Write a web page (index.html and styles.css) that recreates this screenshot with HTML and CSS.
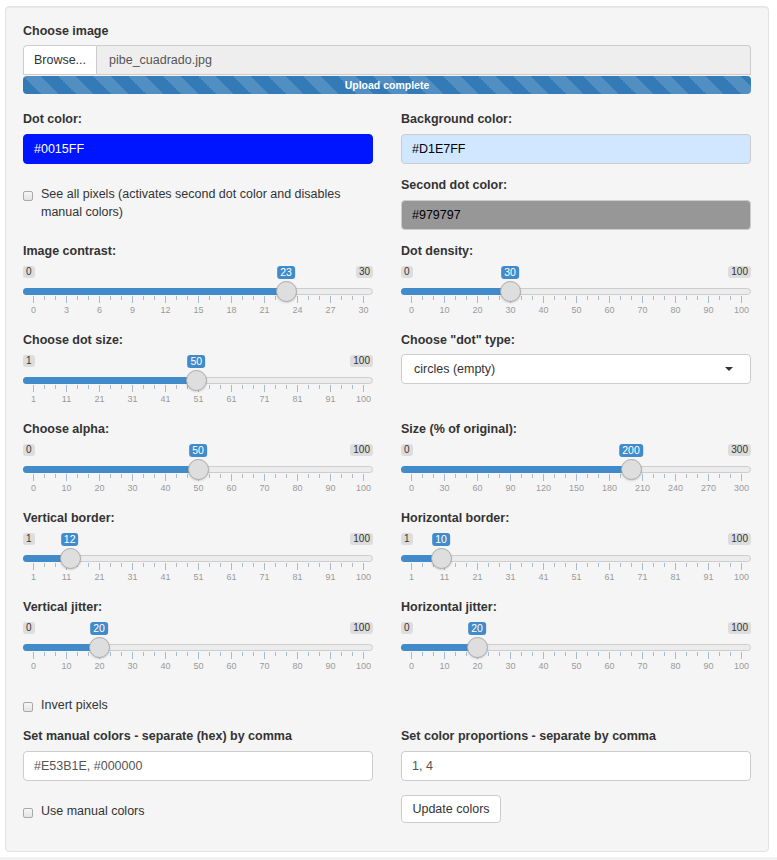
FILE: index.html
```html
<!DOCTYPE html>
<html lang="en">
<head>
<meta charset="utf-8">
<title>Dot image settings</title>
<link rel="stylesheet" href="styles.css">
</head>
<body>
<div class="well">
  <div class="field">
    <label class="ctl-label">Choose image</label>
    <div class="file-row"><span class="btn-browse">Browse...</span><span class="file-name">pibe_cuadrado.jpg</span></div>
    <div class="progress">Upload complete</div>
  </div>

  <div class="row r-colors">
    <div class="col">
      <label class="ctl-label">Dot color:</label>
      <div class="input c-dot">#0015FF</div>
      <div class="check check-two"><span class="box"></span><span>See all pixels (activates second dot color and disables manual colors)</span></div>
    </div>
    <div class="col">
      <label class="ctl-label">Background color:</label>
      <div class="input c-bg">#D1E7FF</div>
      <label class="ctl-label lbl-second">Second dot color:</label>
      <div class="input c-second">#979797</div>
    </div>
  </div>

  <div class="row r-sliders">
    <div class="slider">
      <label class="ctl-label">Image contrast:</label>
      <div class="irs" style="--p:0.7667">
        <div class="irs-minmax"><span class="irs-mm">0</span><span class="irs-mm">30</span></div>
        <div class="irs-track"><span class="irs-bar"></span><span class="irs-single">23</span><span class="irs-handle"></span></div>
        <div class="irs-ticks"></div>
        <div class="irs-grid"><span>0</span><span>3</span><span>6</span><span>9</span><span>12</span><span>15</span><span>18</span><span>21</span><span>24</span><span>27</span><span>30</span></div>
      </div>
    </div>
    <div class="slider">
      <label class="ctl-label">Dot density:</label>
      <div class="irs" style="--p:0.3">
        <div class="irs-minmax"><span class="irs-mm">0</span><span class="irs-mm">100</span></div>
        <div class="irs-track"><span class="irs-bar"></span><span class="irs-single">30</span><span class="irs-handle"></span></div>
        <div class="irs-ticks"></div>
        <div class="irs-grid"><span>0</span><span>10</span><span>20</span><span>30</span><span>40</span><span>50</span><span>60</span><span>70</span><span>80</span><span>90</span><span>100</span></div>
      </div>
    </div>

    <div class="slider">
      <label class="ctl-label">Choose dot size:</label>
      <div class="irs" style="--p:0.4949">
        <div class="irs-minmax"><span class="irs-mm">1</span><span class="irs-mm">100</span></div>
        <div class="irs-track"><span class="irs-bar"></span><span class="irs-single">50</span><span class="irs-handle"></span></div>
        <div class="irs-ticks"></div>
        <div class="irs-grid"><span>1</span><span>11</span><span>21</span><span>31</span><span>41</span><span>51</span><span>61</span><span>71</span><span>81</span><span>91</span><span>100</span></div>
      </div>
    </div>
    <div class="select-field">
      <label class="ctl-label">Choose "dot" type:</label>
      <div class="select"><span>circles (empty)</span><span class="caret"></span></div>
    </div>

    <div class="slider">
      <label class="ctl-label">Choose alpha:</label>
      <div class="irs" style="--p:0.5">
        <div class="irs-minmax"><span class="irs-mm">0</span><span class="irs-mm">100</span></div>
        <div class="irs-track"><span class="irs-bar"></span><span class="irs-single">50</span><span class="irs-handle"></span></div>
        <div class="irs-ticks"></div>
        <div class="irs-grid"><span>0</span><span>10</span><span>20</span><span>30</span><span>40</span><span>50</span><span>60</span><span>70</span><span>80</span><span>90</span><span>100</span></div>
      </div>
    </div>
    <div class="slider">
      <label class="ctl-label">Size (% of original):</label>
      <div class="irs" style="--p:0.6667">
        <div class="irs-minmax"><span class="irs-mm">0</span><span class="irs-mm">300</span></div>
        <div class="irs-track"><span class="irs-bar"></span><span class="irs-single">200</span><span class="irs-handle"></span></div>
        <div class="irs-ticks"></div>
        <div class="irs-grid"><span>0</span><span>30</span><span>60</span><span>90</span><span>120</span><span>150</span><span>180</span><span>210</span><span>240</span><span>270</span><span>300</span></div>
      </div>
    </div>

    <div class="slider">
      <label class="ctl-label">Vertical border:</label>
      <div class="irs" style="--p:0.1111">
        <div class="irs-minmax"><span class="irs-mm">1</span><span class="irs-mm">100</span></div>
        <div class="irs-track"><span class="irs-bar"></span><span class="irs-single">12</span><span class="irs-handle"></span></div>
        <div class="irs-ticks"></div>
        <div class="irs-grid"><span>1</span><span>11</span><span>21</span><span>31</span><span>41</span><span>51</span><span>61</span><span>71</span><span>81</span><span>91</span><span>100</span></div>
      </div>
    </div>
    <div class="slider">
      <label class="ctl-label">Horizontal border:</label>
      <div class="irs" style="--p:0.0909">
        <div class="irs-minmax"><span class="irs-mm">1</span><span class="irs-mm">100</span></div>
        <div class="irs-track"><span class="irs-bar"></span><span class="irs-single">10</span><span class="irs-handle"></span></div>
        <div class="irs-ticks"></div>
        <div class="irs-grid"><span>1</span><span>11</span><span>21</span><span>31</span><span>41</span><span>51</span><span>61</span><span>71</span><span>81</span><span>91</span><span>100</span></div>
      </div>
    </div>

    <div class="slider">
      <label class="ctl-label">Vertical jitter:</label>
      <div class="irs" style="--p:0.2">
        <div class="irs-minmax"><span class="irs-mm">0</span><span class="irs-mm">100</span></div>
        <div class="irs-track"><span class="irs-bar"></span><span class="irs-single">20</span><span class="irs-handle"></span></div>
        <div class="irs-ticks"></div>
        <div class="irs-grid"><span>0</span><span>10</span><span>20</span><span>30</span><span>40</span><span>50</span><span>60</span><span>70</span><span>80</span><span>90</span><span>100</span></div>
      </div>
    </div>
    <div class="slider">
      <label class="ctl-label">Horizontal jitter:</label>
      <div class="irs" style="--p:0.2">
        <div class="irs-minmax"><span class="irs-mm">0</span><span class="irs-mm">100</span></div>
        <div class="irs-track"><span class="irs-bar"></span><span class="irs-single">20</span><span class="irs-handle"></span></div>
        <div class="irs-ticks"></div>
        <div class="irs-grid"><span>0</span><span>10</span><span>20</span><span>30</span><span>40</span><span>50</span><span>60</span><span>70</span><span>80</span><span>90</span><span>100</span></div>
      </div>
    </div>
  </div>

  <div class="check check-invert"><span class="box"></span><span>Invert pixels</span></div>

  <div class="row r-manual">
    <div class="col">
      <label class="ctl-label">Set manual colors - separate (hex) by comma</label>
      <div class="input">#E53B1E, #000000</div>
      <div class="check check-manual"><span class="box"></span><span>Use manual colors</span></div>
    </div>
    <div class="col">
      <label class="ctl-label">Set color proportions - separate by comma</label>
      <div class="input">1, 4</div>
      <div class="btn-row"><span class="btn">Update colors</span></div>
    </div>
  </div>
</div>
<div class="next-strip"></div>
</body>
</html>
```

FILE: styles.css
```css
* { box-sizing: border-box; }

body {
  margin: 0;
  background: #ffffff;
  font-family: "Liberation Sans", Arial, sans-serif;
  font-size: 12.5px;
  color: #333333;
}

.well {
  margin: 6px 8px 0 5px;
  width: 764px;
  background: #f5f5f5;
  border: 1px solid #e3e3e3;
  border-radius: 4px;
  box-shadow: inset 0 1px 1px rgba(0, 0, 0, 0.05);
  padding: 15px 17px 28px 17px;
}

.ctl-label {
  display: block;
  font-weight: bold;
  font-size: 12.5px;
  line-height: 18px;
  height: 18px;
  margin-bottom: 6px;
  white-space: nowrap;
}

/* file input */
.field .ctl-label { margin-bottom: 5px; }

.file-row {
  display: flex;
  height: 30px;
}
.btn-browse {
  width: 74px;
  display: flex;
  align-items: center;
  justify-content: center;
  background: #ffffff;
  border: 1px solid #cccccc;
  border-radius: 4px 0 0 0;
  color: #333333;
}
.file-name {
  flex: 1;
  display: flex;
  align-items: center;
  padding-left: 12px;
  background: #eeeeee;
  border: 1px solid #cccccc;
  border-left: none;
  border-radius: 0 4px 0 0;
  color: #555555;
}

.progress {
  margin-top: 1px;
  height: 18px;
  line-height: 18px;
  border-radius: 4px;
  background-color: #337ab7;
  background-image: linear-gradient(45deg,
    rgba(255, 255, 255, 0.15) 25%, transparent 25%,
    transparent 50%, rgba(255, 255, 255, 0.15) 50%,
    rgba(255, 255, 255, 0.15) 75%, transparent 75%, transparent);
  background-size: 35px 35px;
  color: #ffffff;
  font-weight: bold;
  font-size: 10.5px;
  text-align: center;
}

/* grid rows */
.row {
  display: grid;
  grid-template-columns: 350px 350px;
  column-gap: 28px;
}
.r-colors { margin-top: 16px; }
.r-sliders { margin-top: 12px; }
.r-manual { margin-top: 13px; }

.input {
  height: 30px;
  display: flex;
  align-items: center;
  padding: 0 10px;
  background: #ffffff;
  border: 1px solid #cccccc;
  border-radius: 4px;
  color: #555555;
}
.c-dot { background: #0015ff; border-color: #0015ff; color: #ffffff; }
.c-bg { background: #d1e7ff; color: #000000; }
.c-second { background: #979797; color: #000000; }
.lbl-second { margin-top: 12px; }

/* checkbox */
.check {
  display: flex;
  align-items: flex-start;
  gap: 8px;
  line-height: 18px;
}
.check .box {
  flex: none;
  width: 10px;
  height: 10px;
  margin-top: 6px;
  border: 1px solid #a9a9a9;
  border-radius: 2px;
  background: linear-gradient(#f7f7f7, #e3e3e3);
}
.check-two { margin-top: 21px; padding-right: 20px; }
.check-invert { margin-top: 9px; }
.check-manual { margin-top: 21px; }

/* select */
.select-field .ctl-label { margin-bottom: 5px; }
.select {
  height: 30px;
  display: flex;
  align-items: center;
  justify-content: space-between;
  padding: 0 17px 0 12px;
  background: #ffffff;
  border: 1px solid #cccccc;
  border-radius: 4px;
  color: #333333;
}
.caret {
  width: 0;
  height: 0;
  border-top: 4px solid #333333;
  border-left: 4px solid transparent;
  border-right: 4px solid transparent;
}

/* button */
.btn-row { margin-top: 14px; display: flex; }
.btn {
  height: 28px;
  width: 100px;
  display: flex;
  align-items: center;
  justify-content: center;
  background: #ffffff;
  border: 1px solid #cccccc;
  border-radius: 4px;
  color: #333333;
}

/* range slider */
.slider .ctl-label { margin-bottom: 0; }
.irs {
  padding-bottom: 15px;
}
.irs-minmax {
  margin-top: 6px;
  height: 12px;
  display: flex;
  justify-content: space-between;
}
.irs-mm {
  display: block;
  height: 12px;
  line-height: 12px;
  padding: 0 3px;
  font-size: 10px;
  background: #dddddd;
  color: #333333;
  border-radius: 3px;
}
.irs-track {
  position: relative;
  margin-top: 10px;
  height: 7px;
  background: #ececec;
  border: 1px solid #cdcdcd;
  border-radius: 5px;
}
.irs-bar {
  position: absolute;
  left: -1px;
  top: -1px;
  height: 7px;
  width: calc(10px + 330px * var(--p));
  background: #428bca;
  border-radius: 4px 0 0 4px;
}
.irs-handle {
  position: absolute;
  top: -8px;
  left: calc(330px * var(--p) - 1px);
  width: 21px;
  height: 21px;
  border-radius: 50%;
  background: #dedede;
  border: 1px solid #ababab;
  box-shadow: 0 1px 2px rgba(0, 0, 0, 0.15);
}
.irs-single {
  position: absolute;
  top: -23px;
  left: calc(9px + 330px * var(--p));
  transform: translateX(-50%);
  height: 13px;
  line-height: 13px;
  padding: 0 3px;
  font-size: 10.5px;
  background: #428bca;
  color: #ffffff;
  border-radius: 3px;
  white-space: nowrap;
}
.irs-ticks {
  margin: 1px 0 0 10px;
  width: 331px;
  height: 7px;
  background:
    linear-gradient(to right, #a8bacd 1px, transparent 1px) 0 0 / 33px 7px repeat-x,
    linear-gradient(to right, #a8bacd 1px, transparent 1px) 0 0 / 11px 4px repeat-x;
}
.irs-grid {
  margin: 1px 0 0 -6px;
  display: flex;
  height: 12px;
  line-height: 12px;
  font-size: 9px;
  color: #9a9a9a;
}
.irs-grid span {
  width: 33px;
  flex: none;
  text-align: center;
}

.next-strip {
  margin-top: 5px;
  height: 10px;
  background: #f2f2f2;
}
```
